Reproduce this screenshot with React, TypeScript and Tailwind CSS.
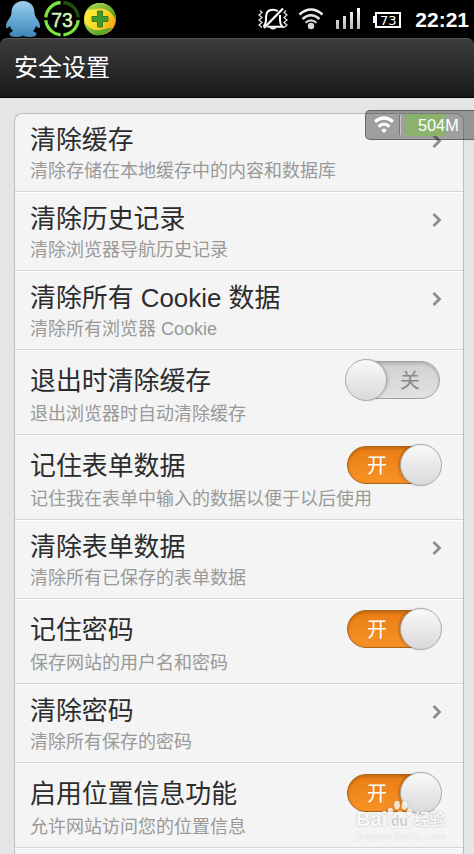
import clsx from "clsx";

type SettingItem = {
  title: string;
  desc: string;
  toggle?: "on" | "off";
};

const SETTINGS: SettingItem[] = [
  { title: "清除缓存", desc: "清除存储在本地缓存中的内容和数据库" },
  { title: "清除历史记录", desc: "清除浏览器导航历史记录" },
  { title: "清除所有 Cookie 数据", desc: "清除所有浏览器 Cookie" },
  { title: "退出时清除缓存", desc: "退出浏览器时自动清除缓存", toggle: "off" },
  { title: "记住表单数据", desc: "记住我在表单中输入的数据以便于以后使用", toggle: "on" },
  { title: "清除表单数据", desc: "清除所有已保存的表单数据" },
  { title: "记住密码", desc: "保存网站的用户名和密码", toggle: "on" },
  { title: "清除密码", desc: "清除所有保存的密码" },
  { title: "启用位置信息功能", desc: "允许网站访问您的位置信息", toggle: "on" },
];

function PenguinIcon() {
  return (
    <svg width="36" height="38" viewBox="0 0 36 38" className="shrink-0">
      <defs>
        <linearGradient id="penguin" x1="0" y1="0" x2="0" y2="1">
          <stop offset="0" stopColor="#9dcfeb" />
          <stop offset="0.5" stopColor="#69abd5" />
          <stop offset="1" stopColor="#3f84b8" />
        </linearGradient>
      </defs>
      <path
        fill="url(#penguin)"
        d="M18 1C11 1 6.500 6 6.500 12.500c0 2-.8 3.500-1.500 5C3 20 1 23 1 26c0 2 .8 2.600 2 1.800l2-1.800c.5 2 1.500 3.600 3 5-2 .8-3.500 2-3.500 3.300C4.500 36 7 37 10.500 37c3.500 0 6-.4 7.500-1.500C19.500 36.600 22 37 25.500 37c3.500 0 6-1 6-2.700 0-1.300-1.500-2.500-3.500-3.300 1.500-1.400 2.500-3 3-5l2 1.800c1.200.8 2 .2 2-1.800 0-3-2-6-4-8.500-.7-1.500-1.500-3-1.500-5C29.500 6 25 1 18 1z"
      />
    </svg>
  );
}

function BatteryRing() {
  return (
    <svg width="36" height="38" viewBox="0 0 36 38" className="shrink-0">
      <g fill="none" strokeWidth="3.300">
        <path d="M19.300 2.500A16.200 16.200 0 0 1 34.200 17.400" stroke="#24500f" />
        <path d="M34.200 20.200A16.200 16.200 0 0 1 19.400 34.800" stroke="#78e440" />
        <path d="M16.600 34.800A16.200 16.200 0 0 1 1.800 20.200" stroke="#78e440" />
        <path d="M1.800 17.400A16.200 16.200 0 0 1 16.600 2.500" stroke="#78e440" />
      </g>
      <text
        x="7.200"
        y="26.500"
        fontSize="20.500"
        textLength="21.500"
        lengthAdjust="spacingAndGlyphs"
        fill="#d3f2b8"
        stroke="#d3f2b8"
        strokeWidth="0.500"
        fontFamily="Liberation Sans, sans-serif"
      >
        73
      </text>
    </svg>
  );
}

function GuardIcon() {
  return (
    <svg width="34" height="34" viewBox="0 0 34 34" className="shrink-0">
      <defs>
        <linearGradient id="guard" x1="0" y1="0.2" x2="1" y2="0.8">
          <stop offset="0" stopColor="#fff13c" />
          <stop offset="0.6" stopColor="#fbd321" />
          <stop offset="1" stopColor="#f09a0c" />
        </linearGradient>
        <linearGradient id="leaf" x1="0" y1="0" x2="1" y2="1">
          <stop offset="0" stopColor="#b5dc4c" />
          <stop offset="1" stopColor="#3b8f1e" />
        </linearGradient>
      </defs>
      <circle cx="17" cy="17" r="16" fill="url(#guard)" />
      <path d="M4 7.500C10-1 23-1 29 6.500c3 3.500 4.200 7.500 4 12C30 11 24 6.500 17 6.500c-5 0-8 2-13 1z" fill="url(#leaf)" />
      <path d="M1 19c3 6 9 9.500 15 9 5-.5 9-2.500 13-2-5 6.500-13 9-19 6.500C5 30 1.500 25 1 19z" fill="url(#leaf)" />
      <path d="M14.500 9h5v5.500H25v5h-5.500V25h-5v-5.500H9v-5h5.500z" fill="#419b2b" stroke="#357f1c" strokeLinejoin="round" strokeWidth="1" />
    </svg>
  );
}

function SilentIcon() {
  return (
    <svg width="30" height="24" viewBox="0 0 30 24" fill="none" className="shrink-0">
      <path
        d="M5.500 19.800c1.800-1.800 2.500-3.500 2.500-6.500V10c0-5 2.500-7.300 7-7.300 2 0 3.500.5 4.700 1.500M22 8v5.500c0 3 .7 4.500 2.500 6.300H9.500"
        stroke="#fff"
        strokeWidth="2"
      />
      <path d="M25 1.500L6 21" stroke="#fff" strokeWidth="2.200" />
      <path d="M11.500 20.500h7c-1 2.500-6 2.500-7 0z" fill="#fff" />
      <path
        d="M2 3.500L4 5.500L1 8L4 10.500L1 13L4 15.500L1 18L4 20.500M28 3.500L26 5.500L29 8L26 10.500L29 13L26 15.500L29 18L26 20.500"
        stroke="#ddd"
        strokeWidth="1.300"
      />
    </svg>
  );
}

function StatusWifiIcon() {
  return (
    <svg width="26" height="24" viewBox="0 0 26 24" fill="none" className="shrink-0">
      <path d="M1.500 7.500Q13-2.500 24.500 7.500" stroke="#f2f2f2" strokeWidth="2.600" />
      <path d="M4.500 12Q13 4.500 21.500 12" stroke="#e2e2e2" strokeWidth="2.500" />
      <path d="M7.500 15.800Q13 11 18.500 15.800" stroke="#d5d5d5" strokeWidth="2" />
      <circle cx="13" cy="19" r="3.200" fill="#d8d8d8" />
    </svg>
  );
}

function SignalIcon() {
  return (
    <svg width="26" height="22" viewBox="0 0 26 22" className="shrink-0">
      <defs>
        <linearGradient id="signal" x1="0" y1="0" x2="0" y2="22" gradientUnits="userSpaceOnUse">
          <stop offset="0" stopColor="#fff" />
          <stop offset="1" stopColor="#b4b4b4" />
        </linearGradient>
      </defs>
      <g fill="url(#signal)">
        <rect x="1" y="12" width="3" height="9" />
        <rect x="8" y="8" width="3" height="13" />
        <rect x="15" y="4" width="3" height="17" />
        <rect x="22" y="0" width="3" height="21" />
      </g>
    </svg>
  );
}

function BatteryIcon() {
  return (
    <svg width="29" height="18" viewBox="0 0 29 18" className="shrink-0">
      <rect x="3" y="2" width="24" height="14" fill="none" stroke="#fff" strokeWidth="2" />
      <rect x="0" y="5" width="3" height="7" fill="#fff" />
      <text
        x="7"
        y="13.500"
        fontSize="12.500"
        textLength="16.500"
        lengthAdjust="spacingAndGlyphs"
        fill="#fff"
        fontFamily="DejaVu Sans, sans-serif"
      >
        73
      </text>
    </svg>
  );
}

function StatusBar() {
  return (
    <div className="flex h-[38px] items-center bg-black pl-[5px] pr-[5px]">
      <PenguinIcon />
      <div className="ml-[3px]">
        <BatteryRing />
      </div>
      <div className="ml-[3px]">
        <GuardIcon />
      </div>
      <div className="ml-auto flex items-center">
        <SilentIcon />
        <div className="ml-[10px]">
          <StatusWifiIcon />
        </div>
        <div className="ml-[11px]">
          <SignalIcon />
        </div>
        <div className="ml-[12px] mt-[1px]">
          <BatteryIcon />
        </div>
        <span className="ml-[13px] text-[21px] font-bold leading-none text-white">22:21</span>
      </div>
    </div>
  );
}

function Toggle({ on }: { on: boolean }) {
  return (
    <div
      className={clsx(
        "relative flex h-[38px] items-center rounded-full border text-[20px] leading-none",
        on
          ? "mr-[22px] w-[94px] border-[#a96518] bg-linear-to-b from-[#e97f13] to-[#f79125] pl-[19px] text-white shadow-[inset_0_2px_3px_rgba(120,60,0,0.35)]"
          : "mr-[23px] w-[93px] border-[#a3a3a3] bg-linear-to-b from-[#d0d0d0] to-[#e2e2e2] pl-[52px] text-[#888] shadow-[inset_0_2px_3px_rgba(0,0,0,0.15)]"
      )}
    >
      <span className="pt-px">{on ? "开" : "关"}</span>
      {/* knob */}
      <span
        className={clsx(
          "absolute -top-[3px] size-[42px] rounded-full border border-[#a9a9a9] bg-linear-to-b from-[#f9f9f9] to-[#d9d9d9]",
          on
            ? "-right-[2px] shadow-[-2px_0_3px_-1px_rgba(0,0,0,0.3)]"
            : "-left-[3px] shadow-[2px_0_3px_-1px_rgba(0,0,0,0.2)]"
        )}
      />
    </div>
  );
}

function Chevron() {
  return (
    <svg width="10" height="14" viewBox="0 0 10 14" fill="none" className="mr-[21px]">
      <path d="M1.500 1L7.500 7L1.500 13" stroke="#8c8c8c" strokeWidth="2.700" />
    </svg>
  );
}

function SettingRow({ item, first }: { item: SettingItem; first: boolean }) {
  const tall = !!item.toggle;

  return (
    <div
      className={clsx(
        "flex items-start justify-between border-b border-b-[#d5d5d5] pl-[15px]",
        tall ? "h-[85px]" : first ? "h-[78px]" : "h-[79px]",
        !first && "shadow-[inset_0_1px_0_#fff]"
      )}
    >
      <div className={clsx("whitespace-nowrap", tall ? "pt-[15px]" : first ? "pt-[10px]" : "pt-[11px]")}>
        <div className="h-[32px] text-[25.900px] leading-[32px] text-[#2c2c2c]">{item.title}</div>
        <div className={clsx("text-[18px] leading-[24px] text-[#999]", tall ? "mt-[5px]" : "mt-[3px]")}>
          {item.desc}
        </div>
      </div>
      <div className={clsx("-ml-8 shrink-0", tall ? "pt-[11px]" : first ? "pt-[20px]" : "pt-[21px]")}>
        {tall ? <Toggle on={item.toggle === "on"} /> : <Chevron />}
      </div>
    </div>
  );
}

function TrafficWidget() {
  return (
    <div className="absolute left-[365px] top-[110px] flex h-[30px] w-[109px] items-center rounded-l-[5px] border border-r-0 border-black/35 bg-black/35 pl-[8px]">
      <svg width="20" height="17" viewBox="0 0 20 17" fill="none" className="-mt-[2px]">
        <path d="M1 5.800Q10-1.800 19 5.800" stroke="#fff" strokeWidth="3.200" />
        <path d="M4.500 10.500Q10 5.800 15.500 10.500" stroke="#fff" strokeWidth="3" />
        <path d="M7.200 14Q10 11.500 12.800 14L10 17z" fill="#fff" />
      </svg>
      <div className="ml-[5px] h-[20px] w-px bg-[#777]" />
      <div className="h-[20px] w-px bg-white/40" />
      <div className="relative ml-[4px] h-[22px] w-[41px] bg-[#8bb26b]">
        <span className="absolute left-[13px] top-0 text-[16.300px] leading-[23px] text-white">504M</span>
      </div>
    </div>
  );
}

function Watermark() {
  return (
    <div className="absolute left-[356px] top-[800px] w-[92px] text-white/90 [text-shadow:0_0_2px_rgba(0,0,0,0.3)]">
      <div className="flex h-[30px] items-end leading-none">
        <span className="text-[20px] font-bold leading-[21px]">Bai</span>
        <svg width="26" height="30" viewBox="0 0 26 30" className="drop-shadow-[0_0_1px_rgba(0,0,0,0.2)]">
          <g fill="#fff" fillOpacity="0.8">
            <ellipse cx="3.500" cy="11.500" rx="2.700" ry="3.800" />
            <ellipse cx="10" cy="5" rx="2.900" ry="4.300" />
            <ellipse cx="17.500" cy="5.500" rx="2.900" ry="4.300" />
            <ellipse cx="22.500" cy="12" rx="2.700" ry="3.800" />
            <path d="M13 11c-4 0-5 4-8.500 7-4 4-3 10 2 10 3 0 4-.5 6.500-.5s3.500.5 6.500.5c5 0 6-6 2-10-3.500-3-4.500-7-8.500-7z" />
          </g>
          <text
            x="12.500"
            y="26"
            textAnchor="middle"
            fontSize="14"
            fontWeight="bold"
            fill="#d2d0cd"
            fontFamily="Liberation Sans, sans-serif"
            className="[text-shadow:none]"
          >
            du
          </text>
        </svg>
        <span className="ml-[1px] text-[15.500px] font-bold leading-[20px]">经验</span>
      </div>
      <div className="text-[11.200px] leading-[13px] text-white/70 [text-shadow:0_0_1px_rgba(0,0,0,0.15)]">
        jingyan.baidu.com
      </div>
    </div>
  );
}

export default function App() {
  return (
    <div className="relative h-[854px] w-[474px] overflow-hidden bg-[#e5e5e5] font-['Liberation_Sans','Noto_Sans_CJK_SC',sans-serif]">
      <StatusBar />

      {/* title bar */}
      <div className="bg-black">
        <div className="flex h-[60px] items-center rounded-t-[7px] border-b border-b-black border-t border-t-[#555] bg-linear-to-b from-[#3d3d3d] to-[#191919] pl-[14px] text-[24px] text-white">
          安全设置
        </div>
      </div>

      {/* settings list */}
      <div className="ml-[14px] mt-[15px] w-[450px] rounded-t-[8px] border border-b-0 border-[#bdbdbd] bg-[#f4f4f4]">
        {SETTINGS.map((item, index) => (
          <SettingRow key={item.title} item={item} first={index === 0} />
        ))}
        <div className="h-[40px] shadow-[inset_0_1px_0_#fff]" />
      </div>

      <TrafficWidget />
      <Watermark />
    </div>
  );
}
